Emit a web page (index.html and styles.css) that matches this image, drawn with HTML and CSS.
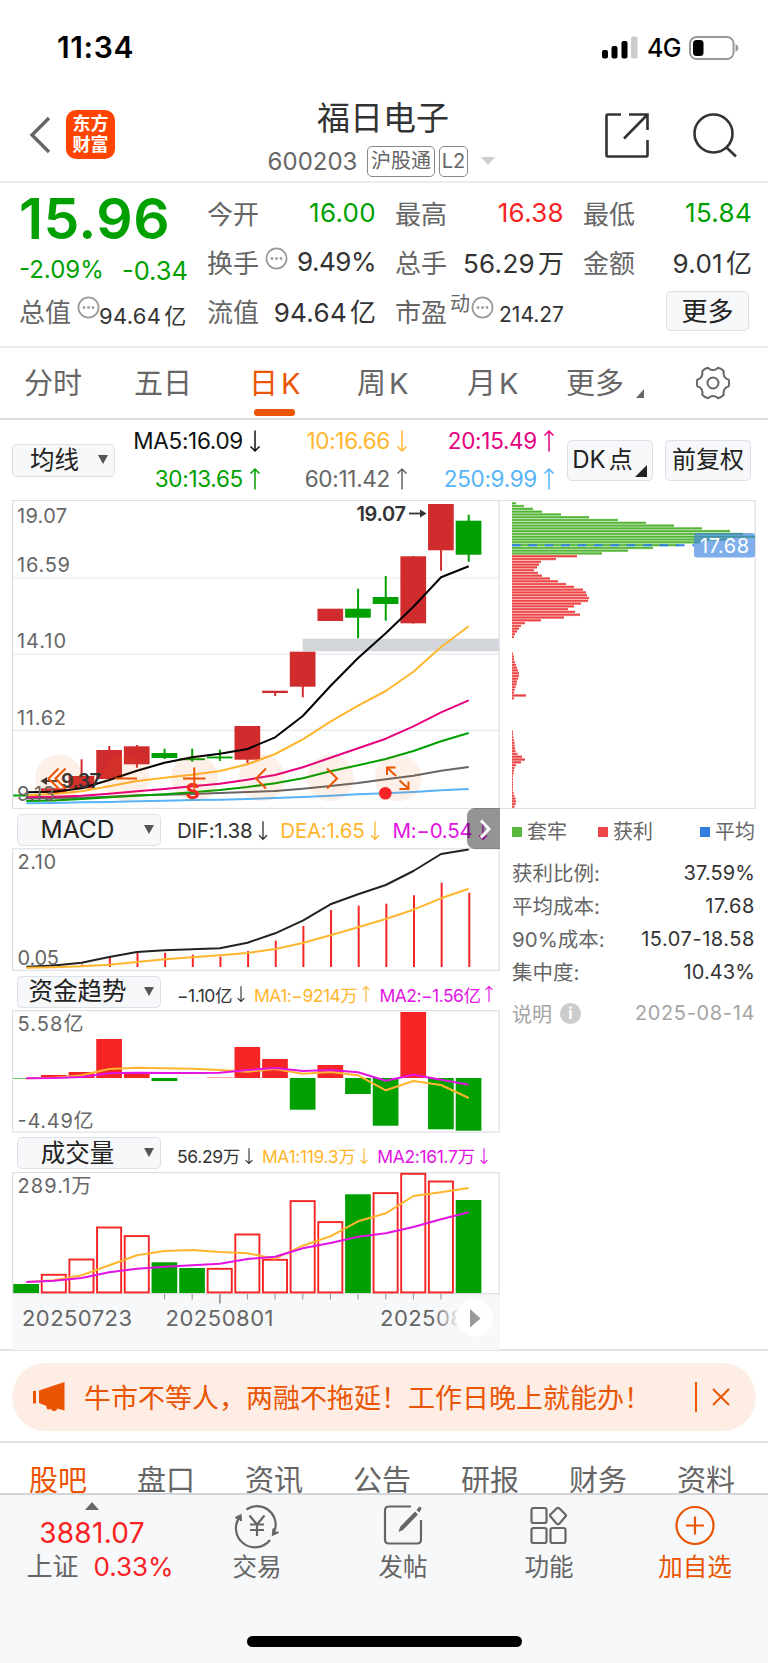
FILE: index.html
```
<!DOCTYPE html>
<html lang="zh-CN">
<head>
<meta charset="utf-8">
<meta name="viewport" content="width=device-width, initial-scale=1.0">
<title>福日电子 600203</title>
  <link rel="stylesheet" href="styles.css">
</head>
<body>

  <svg class="defs">
    <symbol id="down" viewBox="0 0 12 24"><path d="M6 1.5V22M1.5 17.5L6 22l4.500-4.500"/></symbol>
    <symbol id="up" viewBox="0 0 12 24"><path d="M6 22.500V2M1.500 6.500L6 2l4.500 4.500"/></symbol>
    <symbol id="dots" viewBox="0 0 24 24"><circle cx="12" cy="12" r="10.500"/><path d="M6 12h2.600M10.700 12h2.600M15.400 12h2.600" stroke-width="2.400"/></symbol>
  </svg>

  <div class="status">
    <span class="time">11:34</span>
    <svg class="signal" width="36" height="24" viewBox="0 0 36 24">
      <rect x="0" y="14" width="6" height="8.500" rx="2"/>
      <rect x="9.500" y="10" width="6" height="12.500" rx="2"/>
      <rect x="19.500" y="5" width="6" height="17.500" rx="2"/>
      <rect x="29" y="0.500" width="6.500" height="22" rx="2" fill="#ccc"/>
    </svg>
    <span class="net">4G</span>
    <svg class="battery" width="50" height="24" viewBox="0 0 50 24">
      <rect x="1" y="1" width="43.500" height="22" rx="6.500" fill="none" stroke="#999" stroke-width="2"/>
      <rect x="4" y="4" width="10.500" height="16" rx="3.500"/>
      <path d="M46.500 8q3 1.500 3 4t-3 4z" fill="#999"/>
    </svg>
  </div>

  <div class="header">
    <svg class="back" width="22" height="38" viewBox="0 0 22 38"><path d="M20 2L3 19l17 17"/></svg>
    <div class="logo">东方<br>财富</div>
    <div class="stock">
      <h1>福日电子</h1>
      <div class="code"><span class="num">600203</span><span class="tag">沪股通</span><span class="tag l2">L2</span><i class="caret"></i></div>
    </div>
    <svg class="share" width="46" height="46" viewBox="0 0 46 46"><path d="M17 2.500H3.500q-1 0-1 1v40q0 1 1 1h39q1 0 1-1V28M25 2.500h18.500V18M43.500 2.500L20 26.500"/></svg>
    <svg class="search" width="46" height="46" viewBox="0 0 46 46"><circle cx="21.500" cy="21.500" r="19"/><path d="M34.500 35.500L44 44.500"/></svg>
  </div>

  <div class="quote">
    <div class="col first">
      <div class="price">15.96</div>
      <div class="change"><span>-2.09%</span><span class="diff">-0.34</span></div>
      <div class="row"><label>总值</label><svg class="dots"><use href="#dots"/></svg><b class="small">94.64<i>亿</i></b></div>
    </div>
    <div class="col">
      <div class="row"><label>今开</label><b class="green">16.00</b></div>
      <div class="row"><label>换手</label><svg class="dots gap"><use href="#dots"/></svg><b class="pct">9.49%</b></div>
      <div class="row"><label>流值</label><b>94.64<i>亿</i></b></div>
    </div>
    <div class="col">
      <div class="row"><label>最高</label><b class="red">16.38</b></div>
      <div class="row"><label>总手</label><b>56.29<i>万</i></b></div>
      <div class="row"><label>市盈</label><sup>动</sup><svg class="dots"><use href="#dots"/></svg><b class="tiny">214.27</b></div>
    </div>
    <div class="col">
      <div class="row"><label>最低</label><b class="green">15.84</b></div>
      <div class="row"><label>金额</label><b>9.01<i>亿</i></b></div>
      <div class="row"><button class="more">更多</button></div>
    </div>
  </div>

  <div class="tabs">
    <span>分时</span>
    <span>五日</span>
    <span class="on">日<em>K</em></span>
    <span>周<em>K</em></span>
    <span>月<em>K</em></span>
    <span class="corner">更多</span>
    <svg class="gear" width="36" height="36" viewBox="0 0 36 36">
      <path d="M18 5Q21 5 22.900 2.800Q26.500 3.600 28.700 6.100Q28.200 9.500 29.300 11.500Q30.500 13.800 33.700 14.700Q34.600 18 33.700 21.300Q30.500 22.200 29.300 24.500Q28.200 26.500 28.700 29.900Q26.500 32.400 22.900 33.200Q21 31 18 31Q15 31 13.100 33.200Q9.500 32.400 7.300 29.900Q7.800 26.500 6.700 24.500Q5.500 22.200 2.300 21.300Q1.400 18 2.300 14.700Q5.500 13.800 6.700 11.500Q7.800 9.500 7.300 6.100Q9.500 3.600 13.100 2.800Q15 5 18 5z"/>
      <circle cx="18" cy="18" r="5.500"/>
    </svg>
  </div>

  <div class="ma">
    <button class="pick ma-pick">均线<i></i></button>
    <div class="ma-list">
      <span class="c5">MA5:16.09<svg><use href="#down"/></svg></span>
      <span class="c10">10:16.66<svg><use href="#down"/></svg></span>
      <span class="c20">20:15.49<svg><use href="#up"/></svg></span>
      <span class="c30">30:13.65<svg><use href="#up"/></svg></span>
      <span class="c60">60:11.42<svg><use href="#up"/></svg></span>
      <span class="c250">250:9.99<svg><use href="#up"/></svg></span>
    </div>
    <button class="dk">DK<span>点</span></button>
    <button class="fq">前复权</button>
  </div>

  <div class="charts">
    <div class="left">
      <svg id="kline" width="500" height="309" viewBox="0 500 500 309"></svg>

      <div class="ind">
        <button class="pick">MACD<i></i></button>
        <div class="vals">
          <span class="c60b">DIF:1.38<svg><use href="#down"/></svg></span>
          <span class="c10">DEA:1.65<svg><use href="#down"/></svg></span>
          <span class="mag">M:−0.54<svg><use href="#down"/></svg></span>
        </div>
        <div class="fold"><svg width="12" height="20" viewBox="0 0 12 20"><path d="M2 1.500l8 8.500l-8 8.500"/></svg></div>
      </div>
      <svg id="macd" width="500" height="123" viewBox="0 848 500 123"></svg>

      <div class="ind fund">
        <button class="pick">资金趋势<i></i></button>
        <div class="vals sm">
          <span class="c60b">−1.10亿<svg><use href="#down"/></svg></span>
          <span class="c10">MA1:−9214万<svg><use href="#up"/></svg></span>
          <span class="mag">MA2:−1.56亿<svg><use href="#up"/></svg></span>
        </div>
      </div>
      <svg id="fund" width="500" height="123" viewBox="0 1010 500 123"></svg>

      <div class="ind vol">
        <button class="pick">成交量<i></i></button>
        <div class="vals sm">
          <span class="c60b">56.29万<svg><use href="#down"/></svg></span>
          <span class="c10">MA1:119.3万<svg><use href="#down"/></svg></span>
          <span class="mag">MA2:161.7万<svg><use href="#down"/></svg></span>
        </div>
      </div>
      <svg id="vol" width="500" height="178" viewBox="0 1172 500 178"></svg>
    </div>

    <div class="right">
      <svg id="chips" width="268" height="309" viewBox="500 500 268 309"></svg>
      <div class="legend">
        <span><i class="g"></i>套牢</span>
        <span><i class="r"></i>获利</span>
        <span><i class="b"></i>平均</span>
      </div>
      <dl>
        <dt>获利比例:</dt><dd>37.59%</dd>
        <dt>平均成本:</dt><dd>17.68</dd>
        <dt>90%成本:</dt><dd>15.07-18.58</dd>
        <dt>集中度:</dt><dd>10.43%</dd>
      </dl>
      <div class="note"><span>说明</span><i>i</i><time>2025-08-14</time></div>
    </div>
  </div>

  <div class="ad">
    <div class="banner">
      <svg width="34" height="30" viewBox="0 0 34 30"><path d="M1 9h3v12.500H1zM7 8.500L32.500 0v28.500l-7.500-2v1q-1 2-4 1.500l-1.500-1v-1.500l-1.500 1q-2.500.500-3.500-1.500v-2L7 21z"/></svg>
      <p>牛市不等人，两融不拖延！工作日晚上就能办！</p>
      <svg class="close" width="18" height="18" viewBox="0 0 18 18"><path d="M1 1l16 16M17 1L1 17"/></svg>
    </div>
  </div>

  <div class="sections">
    <span class="on">股吧</span><span>盘口</span><span>资讯</span><span>公告</span><span>研报</span><span>财务</span><span>资料</span>
  </div>

  <div class="bottom">
    <div class="index">
      <i></i>
      <strong>3881.07</strong>
      <p>上证<em>0.33%</em></p>
    </div>
    <div class="item">
      <svg width="46" height="42" viewBox="0 0 46 42"><path d="M12.500 5.500A18.500 18.500 0 0 1 41 25.500l-1.500 4.500M36 36A18.500 18.500 0 0 1 6 12.500M1.500 14l5-2.500l.500 5.500M44.500 28l-5.500 2.500l.500-6M15.500 11.500l7.500 9l7.500-9M23 20.500v11.500M16 20.500h14M16 26h14"/></svg>
      <span>交易</span>
    </div>
    <div class="item">
      <svg width="42" height="42" viewBox="0 0 42 42"><path d="M29 2.500H7q-4 0-4 4v29q0 4 4 4h28q4 0 4-4V16"/><path d="M16.500 28l1.500-5L33 7.500l3 3L21 26zM34.500 6l2.500-3q2-1 2.500 1.500L37.500 8.500z" fill="#666" stroke="none"/></svg>
      <span>发帖</span>
    </div>
    <div class="item">
      <svg width="42" height="42" viewBox="0 0 42 42"><rect x="3.500" y="4" width="15" height="15" rx="2"/><rect x="3.500" y="24" width="15" height="15" rx="2"/><rect x="22.500" y="24" width="15" height="15" rx="2"/><path d="M28.500 4.500q1.500-1.500 3 0l6 6q1 1 0 2l-6 7q-1.500 1.500-3 0l-6-7q-1-1 0-2z"/></svg>
      <span>功能</span>
    </div>
    <div class="item add">
      <svg width="42" height="42" viewBox="0 0 42 42"><circle cx="21" cy="21.500" r="18.500"/><path d="M21 12.500v18M12 21.500h18"/></svg>
      <span>加自选</span>
    </div>
    <div class="home"></div>
  </div>

  <script src="script.js"></script>
</body>
</html>
```
FILE: styles.css
```
* {
  box-sizing: border-box;
}

body {
  margin: 0;
  width: 768px;
  height: 1663px;
  overflow: hidden;
  background-color: #fff;
  color: #333;
  font-family: Inter, "Noto Sans CJK SC", sans-serif;
  font-weight: 400;
}

svg {
  display: block;
  flex: none;
}

i, em {
  font-style: normal;
}

button {
  font-family: inherit;
  color: #222;
  background-color: #f7f8fa;
  border: 1.500px solid #dde0e6;
  border-radius: 5px;
  padding: 0;
}

.defs {
  position: absolute;
  width: 0;
  height: 0;
}

/* status bar */
.status {
  display: flex;
  align-items: center;
  height: 94px;
  padding: 0 29px 0 57px;
}

.time {
  font-size: 30px;
  font-weight: 600;
  color: #000;
  margin-right: auto;
  letter-spacing: 0.6px;
}

.net {
  font-size: 25px;
  font-weight: 500;
  color: #000;
  margin: 2px 9px 0 9px;
  width: 33px;
  letter-spacing: -0.7px;
}

.signal,
.battery {
  margin-top: 1px;
}

/* header */
.header {
  display: flex;
  align-items: center;
  height: 89px;
  border-bottom: 2px solid #ececec;
  padding: 0 30px 6px 29px;
}

.header svg {
  fill: none;
  stroke: #333;
  stroke-width: 2.6;
}

.header .back {
  stroke: #666;
  stroke-width: 3.4;
}

.logo {
  width: 49px;
  height: 49px;
  margin-left: 15px;
  border-radius: 10px;
  background-color: #ff4400;
  color: #fff;
  font-size: 18px;
  font-weight: 600;
  line-height: 20.5px;
  text-align: center;
  padding-top: 4px;
}

.stock {
  width: 240px;
  margin: 4px auto 0 148px;
  text-align: center;
}

.stock h1 {
  margin: 2px 0 0;
  font-size: 33px;
  font-weight: 400;
  line-height: 42px;
}

.code {
  display: flex;
  align-items: center;
  height: 34px;
  margin: 5px 0 0 4px;
  color: #666;
}

.code .num {
  font-size: 24px;
  width: 91px;
  letter-spacing: 0;
}

.tag {
  height: 31px;
  width: 68px;
  margin-left: 9px;
  border: 1.5px solid #888;
  border-radius: 5px;
  font-size: 20px;
  line-height: 28px;
}

.tag.l2 {
  width: 29px;
  margin-left: 4px;
}

.caret {
  border: 7px solid transparent;
  border-top: 8px solid #ccc;
  border-bottom: 0;
  margin-left: 13px;
}

.share {
  margin-right: 0;
}

.search {
  margin-left: 42px;
}

/* quote */
.quote {
  display: flex;
  height: 165px;
  border-bottom: 2px solid #ececec;
  padding: 5px 15px 0 19px;
}

.col {
  width: 169px;
  margin-left: 19px;
}

.col.first {
  margin-left: 0;
}

.row {
  display: flex;
  align-items: center;
  height: 49px;
}

.row label {
  font-size: 26px;
  color: #666;
}

.row b {
  margin-left: auto;
  font-size: 26px;
  font-weight: 400;
  letter-spacing: 0.3px;
  white-space: nowrap;
}

.row b i {
  margin-left: 3px;
  letter-spacing: 0;
}

.row b.pct {
  letter-spacing: -0.5px;
}

.row b.small {
  font-size: 22px;
  margin: 6px 0 0 -1px;
}

.row b.tiny {
  font-size: 21px;
  letter-spacing: 0;
  margin-top: 7px;
}

.green {
  color: #00a000;
}

.red {
  color: #f82222;
}

.row sup {
  font-size: 20px;
  color: #666;
  margin: -14px 1px 0 3px;
  line-height: 20px;
}

.dots {
  width: 23px;
  height: 23px;
  margin: -7px 0 0 6px;
  fill: none;
  stroke: #999;
  stroke-width: 1.8;
}

sup + .dots {
  margin-left: 0;
}

.price {
  height: 65px;
  color: #00a000;
  font-size: 57px;
  font-weight: 600;
  line-height: 61px;
  letter-spacing: 0.4px;
}

.change {
  display: flex;
  justify-content: space-between;
  height: 33px;
  line-height: 33px;
  color: #00a000;
  font-size: 24px;
}

.diff {
  font-size: 25.5px;
  padding-top: 1px;
}

.more {
  width: 83px;
  height: 40px;
  margin: 1px 3px 0 auto;
  font-size: 26px;
  line-height: 37px;
}

/* period tabs */
.tabs {
  display: grid;
  grid-template-columns: 110px 110px 111px 110px 110px 117px 1fr;
  height: 72px;
  border-bottom: 2px solid #d8dbe0;
  font-size: 29px;
  line-height: 72px;
  color: #666;
}

.tabs span {
  padding-left: 24px;
  white-space: nowrap;
}

.tabs span:nth-child(3) {
  padding-left: 29px;
}

.tabs span:nth-child(4),
.tabs span:nth-child(5) {
  padding-left: 26px;
}

.tabs span:nth-child(6) {
  padding-left: 15px;
}

.tabs em {
  margin-left: 3px;
}

.tabs .on {
  position: relative;
  color: #ea5504;
}

.tabs .on::after {
  content: "";
  position: absolute;
  left: 34px;
  bottom: 4px;
  width: 41px;
  height: 7px;
  border-radius: 3px;
  background-color: #ea5504;
}

.corner::after {
  content: "";
  display: inline-block;
  border-left: 8px solid transparent;
  border-bottom: 9px solid #666;
  margin-left: 12px;
  vertical-align: -4px;
}

.gear {
  margin: 17px 0 0 27px;
  fill: none;
  stroke: #666;
  stroke-width: 2;
}

/* moving averages */
.ma {
  display: flex;
  align-items: center;
  height: 80px;
  padding-left: 12px;
}

.pick {
  position: relative;
  width: 144px;
  height: 32px;
  font-size: 24.5px;
  line-height: 29px;
  padding-right: 23px;
}

.pick i {
  position: absolute;
  right: 6px;
  top: 10px;
  border: 5px solid transparent;
  border-top: 9px solid #555;
  border-bottom: 0;
}

.ma-pick {
  width: 103px;
  height: 33px;
  padding-right: 18px;
}

.ma-list {
  display: grid;
  grid-template-columns: 146px 147px 147px;
  grid-auto-rows: 38px;
  width: 440px;
  font-size: 22.5px;
  line-height: 38px;
  letter-spacing: -0.3px;
}

.ma-list span {
  display: flex;
  align-items: center;
  justify-content: flex-end;
}

.ma-list svg,
.vals svg {
  width: 12px;
  height: 24px;
  margin-left: 6px;
  fill: none;
  stroke: currentColor;
  stroke-width: 1.5;
}

.c5 { color: #111; }
.c10 { color: #ffb62e; }
.c20 { color: #e6007e; }
.c30 { color: #00a000; }
.c60 { color: #666; }
.c60b { color: #333; }
.c250 { color: #58b4f8; }
.mag { color: #e313e3; }

.dk,
.fq {
  position: relative;
  width: 86px;
  height: 41px;
  font-size: 24px;
  line-height: 38px;
  white-space: nowrap;
}

.dk {
  margin-left: 12px;
  padding-right: 15px;
}

.dk span {
  margin-left: 3px;
  font-size: 24px;
}

.dk::after {
  content: "";
  position: absolute;
  right: 5px;
  bottom: 3px;
  border-left: 12px solid transparent;
  border-bottom: 12px solid #222;
}

.fq {
  margin-left: 12px;
}

/* charts */
.charts {
  display: grid;
  grid-template-columns: 500px 268px;
  height: 851px;
  border-bottom: 2px solid #e0e3e7;
}

.ind {
  position: relative;
  display: flex;
  align-items: center;
  height: 39px;
  padding: 2px 0 0 17px;
}

.ind.vol {
  padding-top: 1px;
}

.ind .pick {
  flex: none;
}

.vals {
  display: flex;
  gap: 11px;
  margin: 2px 0 0 16px;
  font-size: 20.500px;
  letter-spacing: -0.25px;
  white-space: nowrap;
}

.vals.sm {
  font-size: 17.5px;
  letter-spacing: -0.5px;
  margin-top: 5px;
  gap: 7px;
}

.vals span {
  display: flex;
  align-items: center;
}

.vals svg {
  height: 21px;
  margin-left: 5px;
}

.vals.sm svg {
  height: 18px;
  margin-left: 3px;
}

.vol .vals.sm {
  letter-spacing: -0.35px;
}

.fold {
  position: absolute;
  right: 0;
  top: -1px;
  width: 33px;
  height: 41px;
  border-radius: 8px 0 0 8px;
  background-color: rgba(0, 0, 0, 0.42);
  padding: 11px 0 0 12px;
}

.fold path {
  fill: none;
  stroke: #fff;
  stroke-width: 2.8;
}

svg text {
  font-size: 20px;
  fill: #666;
}

/* cost panel */
.legend {
  display: flex;
  width: 243px;
  margin: 9px 0 0 12px;
  font-size: 20px;
  line-height: 28px;
  color: #666;
}

.legend span:nth-child(2) {
  margin-left: 31px;
}

.legend span:nth-child(3) {
  margin-left: auto;
}

.legend i {
  display: inline-block;
  width: 10px;
  height: 10px;
  margin-right: 5px;
  vertical-align: 2px;
}

.legend .g { background-color: #5bb83f; }
.legend .r { background-color: #ec4747; }
.legend .b { background-color: #2f80e2; }

dl {
  display: grid;
  grid-template-columns: auto auto;
  grid-auto-rows: 33px;
  width: 243px;
  margin: 11px 0 0 12px;
  line-height: 33px;
}

dt {
  font-size: 20.5px;
  color: #666;
}

dd {
  margin: 0;
  font-size: 20px;
  letter-spacing: 0.55px;
  text-align: right;
}

dd:first-of-type,
dd:last-of-type {
  letter-spacing: 0.1px;
}

.note {
  display: flex;
  align-items: center;
  width: 243px;
  height: 30px;
  margin: 9px 0 0 12px;
  font-size: 20px;
  color: #a5a5a5;
}

.note i {
  width: 21px;
  height: 21px;
  margin-left: 8px;
  border-radius: 50%;
  background-color: #ccc;
  color: #fff;
  font-size: 16px;
  font-weight: 700;
  line-height: 21px;
  text-align: center;
}

.note time {
  margin-left: auto;
  letter-spacing: 0.65px;
}

/* banner */
.ad {
  height: 92px;
  padding: 12px;
  border-bottom: 2px solid #e0e3e7;
}

.banner {
  display: flex;
  align-items: center;
  height: 68px;
  border-radius: 34px;
  background-color: #fdede5;
  padding-left: 20px;
}

.banner svg {
  fill: #ea5504;
}

.banner p {
  width: 631px;
  height: 30px;
  margin: 0;
  padding-left: 18px;
  border-right: 2px solid #ea5504;
  font-size: 27px;
  line-height: 33px;
  color: #ea5504;
}

.banner .close {
  margin-left: 15px;
  stroke: #ea5504;
  stroke-width: 2;
}

/* section tabs */
.sections {
  display: flex;
  gap: 50px;
  height: 50px;
  padding: 0 0 0 29px;
  overflow: hidden;
  font-size: 29px;
  line-height: 75px;
  color: #666;
}

.sections .on {
  color: #ea5504;
}

/* bottom bar */
.bottom {
  position: relative;
  display: flex;
  height: 170px;
  border-top: 2px solid #d3d5d8;
  background-color: #f7f8fa;
}

.index {
  width: 184px;
  text-align: center;
  color: #f82222;
}

.index i {
  display: block;
  width: 14px;
  margin: 7px 0 0 85px;
  border: 7px solid transparent;
  border-bottom: 8px solid #666;
  border-top: 0;
}

.index strong {
  display: block;
  font-size: 28px;
  font-weight: 400;
  line-height: 46px;
  letter-spacing: 0.3px;
}

.index p {
  margin: -8px 0 0 16px;
  font-size: 26px;
  line-height: 38px;
  color: #666;
}

.index em {
  margin-left: 15px;
  color: #f82222;
}

.item {
  display: flex;
  flex-direction: column;
  align-items: center;
  width: 146px;
  padding-top: 9px;
  font-size: 24.5px;
  line-height: 42px;
  color: #666;
}

.item svg {
  fill: none;
  stroke: #666;
  stroke-width: 2.2;
  overflow: visible;
}

.item.add {
  color: #ea5504;
}

.item.add svg {
  stroke: #ea5504;
}

.home {
  position: absolute;
  left: 247px;
  bottom: 16px;
  width: 275px;
  height: 11px;
  border-radius: 6px;
  background-color: #000;
}
```
FILE: script.js
```
const RED = '#d02c2e', GREEN = '#00a000', HOT = '#f52525', YEL = '#ffb62e', MAG = '#e313e3';
const STEP = 27.65;
const cx = i => 26.3 + STEP * i;
const left = i => 13.3 + STEP * i;
const BAR = 25.7;

const rect = (x, y, w, h, fill, extra = '') =>
  `<rect x="${x}" y="${y}" width="${w}" height="${h}" fill="${fill}" ${extra}/>`;
const line = (x1, y1, x2, y2, color, w = 1.3) =>
  `<path d="M${x1} ${y1}L${x2} ${y2}" stroke="${color}" stroke-width="${w}" fill="none"/>`;
const curve = (ys, color, w = 2) =>
  `<polyline points="${ys.map((y, i) => cx(i) + ',' + y).join(' ')}" fill="none" stroke="${color}" stroke-width="${w}" stroke-linejoin="round"/>`;
const text = (x, y, len, str, extra = '') =>
  `<text x="${x}" y="${y}" textLength="${len}" ${extra}>${str}</text>`;
const frame = (x, y, w, h) => rect(x, y, w, h, 'none', 'stroke="#dcdfe3" stroke-width="1.2"');

// [color, high, bodyTop, bodyBottom, low]
const candles = [
  [GREEN, 795, 794.5, 796.5, 796], [RED, 788, 788.3, 793, 793], [RED, 759.3, 776, 788.5, 788],
  [RED, 746, 750, 779, 779], [RED, 745, 746.3, 764.3, 767.7], [GREEN, 748.7, 753, 758, 759],
  [GREEN, 748.7, 758.3, 760.2, 761.7], [GREEN, 749.7, 756.5, 758.4, 761], [RED, 726, 726, 759.7, 763],
  [RED, 691, 690.7, 693, 696], [RED, 652, 651.7, 686.7, 697.3], [RED, 609, 608.7, 621, 621],
  [GREEN, 588.7, 608.7, 617.7, 638.3], [GREEN, 576, 597, 604, 620.7], [RED, 556, 556.3, 623.3, 623.5],
  [RED, 504, 504, 550.3, 570.7], [GREEN, 514.7, 520.7, 554.7, 561.7]
];

function drawKline() {
  let s = frame(12.6, 500.5, 486.6, 308);
  [578, 654.2, 730.4].forEach(y => s += line(13, y, 499, y, '#e6e8f0', 1.2));
  s += rect(302.7, 638.7, 196, 12.6, '#d2d5da');
  candles.forEach(([c, hi, top, bot, lo], i) => {
    s += rect(left(i), top, BAR, bot - top, c) + line(cx(i), hi, cx(i), lo, c, 2);
  });
  s += curve([803.3, 803, 802.3, 802, 801.3, 800.7, 800, 799.7, 799, 798, 797, 795.7, 794.3, 793.3, 792, 790.3, 789], '#58b4f8');
  s += curve([798.5, 798, 797.7, 796.7, 795.3, 794.7, 794, 793, 792, 791, 788.7, 786, 783, 779.3, 775.7, 770.7, 767], '#666');
  s += curve([801, 800.5, 799, 797.3, 795.7, 794.3, 792.3, 790, 787, 783.3, 778.3, 771.3, 765.3, 759, 751, 741.3, 733], '#00a000');
  s += curve([797.3, 796.7, 795.7, 793.7, 791.3, 789, 786.3, 783.7, 779.7, 775, 767.3, 757.7, 748.3, 738.7, 726.3, 712.3, 700.3], '#e6007e');
  s += curve([795.3, 794, 791.3, 786.3, 781, 777.7, 774.7, 771, 764.3, 754, 739.3, 721.7, 705.7, 691, 671.7, 647, 626.3], YEL);
  s += curve([792.3, 791.7, 788.3, 780, 770.7, 762.7, 757.3, 753.7, 749, 737.3, 716, 686, 658, 633.3, 606.7, 577.3, 566.3], '#000');
  s += text(17, 523, 50, '19.07') + text(17, 571.7, 53, '16.59') + text(17, 648, 49, '14.10') + text(17, 725, 49, '11.62') + text(17, 801, 38, '9.13');
  s += text(356.5, 520.5, 49.5, '19.07', 'style="font-weight:600;fill:#333"');
  s += line(409, 513.5, 421, 513.5, '#333', 1.8) + '<path d="M420 509.500l6.500 4l-6.500 4z" fill="#333"/>';
  s += text(61, 788, 40, '9.37', 'style="font-weight:600;fill:#333"');
  s += line(46, 781, 58, 781, '#333', 1.8) + '<path d="M47 777l-6.500 4l6.500 4z" fill="#333"/>';
  s += '<text x="185.500" y="799" style="font-size:22px;font-weight:700;fill:#f52525">S</text>';

  // floating controls
  [58.7, 126, 194.3, 262, 330.3, 398.3].forEach(x => s += `<circle cx="${x}" cy="778" r="23.500" fill="#ea5504" fill-opacity=".09"/>`);
  s += `<g fill="none" stroke="#ea5504" stroke-width="2">
    <path d="M58.500 768.500L48.500 778.500L58.500 788.500M65.500 768.500L55.500 778.500L65.500 788.500M115 778.500h22M183 778.500h22.500M194.300 767.500v22M266 768.500L256 778.500L266 788.500M327 768.500L337 778.500L327 788.500"/>
    <path d="M387 775v-7.500h8.500M387.500 768l8.500 8M408.500 781.500v7.500h-9M408.500 788.500l-9-8"/></g>`;
  s += '<circle cx="385.300" cy="793.300" r="6.300" fill="#f52525"/>';
  document.getElementById('kline').innerHTML = s;
}

function drawMacd() {
  let s = frame(12.6, 848.8, 486.6, 121.5);
  const tops = [, , 964.5, 957, 952, 952.7, 954.7, 956.7, 951, 940.7, 926, 910, 905.7, 903.7, 895.3, 882.7, 892.7];
  tops.forEach((y, i) => s += line(cx(i) + 0.6, y, cx(i) + 0.6, 967, HOT, 2));
  s += text(17.5, 868.7, 38.5, '2.10') + text(17.5, 965, 41.5, '0.05');
  s += curve([966.7, 965.5, 962.7, 957, 952, 950.3, 949.3, 948.3, 942.7, 933.3, 920.7, 904.3, 894.3, 885, 871, 854, 849.5], '#222');
  s += curve([967.7, 967.3, 966.3, 964.7, 962, 959.3, 957.3, 955.3, 953, 949, 943, 935.3, 927.3, 919, 909.7, 898.3, 888.7], YEL);
  document.getElementById('macd').innerHTML = s;
}

function drawFund() {
  const zero = 1078;
  const ends = [1078.6, 1075, 1072, 1039, 1074, 1081, 1078, 1077.6, 1047, 1059, 1109.7, 1065, 1094, 1125.7, 1012, 1129.3, 1130.7];
  let s = frame(12.6, 1010.6, 486.6, 121.5);
  ends.forEach((y, i) => s += rect(left(i), Math.min(y, zero), BAR, Math.abs(y - zero), y < zero ? HOT : GREEN));
  s += text(17.5, 1031, 66, '5.58亿') + text(17.5, 1127.5, 76, '-4.49亿');
  s += curve([1078.3, 1077.7, 1075.3, 1069, 1067.7, 1068.3, 1068.7, 1070, 1071.7, 1069, 1073.7, 1072, 1075.3, 1090.3, 1081, 1085, 1098], YEL);
  s += curve([1078.3, 1078, 1077, 1073.3, 1072.7, 1073, 1073, 1072.7, 1070, 1068, 1071, 1070, 1072.3, 1080.7, 1074.7, 1079.7, 1084.7], MAG);
  document.getElementById('fund').innerHTML = s;
}

function drawVol() {
  const tops = [1284, 1274, 1258.7, 1226.7, 1235.3, 1262.3, 1268, 1268, 1233.7, 1259, 1200.3, 1221.3, 1194.3, 1192.3, 1173, 1180.7, 1200];
  const down = [0, 5, 6, 12, 16];
  let s = rect(12.5, 1294, 487.5, 56, '#f7f8fa') + frame(12.6, 1172.6, 486.6, 121);
  tops.forEach((y, i) => {
    s += down.includes(i)
      ? rect(left(i), y, BAR, 1293 - y, GREEN)
      : rect(left(i) + 0.8, y + 0.8, BAR - 1.6, 1291.6 - y, '#fff', `stroke="${HOT}" stroke-width="1.900"`);
  });
  s += text(17.5, 1193, 74, '289.1万');
  s += curve([1282, 1280.3, 1275.3, 1265.3, 1255.3, 1251, 1250, 1252, 1253.3, 1258.7, 1245.7, 1236.3, 1221.3, 1213.3, 1196, 1192.3, 1188], YEL);
  s += curve([1282, 1280.7, 1278, 1272.3, 1268.7, 1266.7, 1265.3, 1263.7, 1259, 1256.7, 1248.3, 1243, 1236.7, 1233.3, 1227, 1219.3, 1212.3], MAG);
  for (let i = 5; i < 16; i++) s += line(cx(i), 1294, cx(i), i == 7 ? 1303.5 : 1299.5, '#999', i == 7 ? 1.8 : 1.1);
  const f = 'style="font-size:22px"';
  s += text(22, 1326, 110, '20250723', f) + text(165.5, 1326, 108, '20250801', f) + text(380, 1326, 108, '20250814', f);
  s += `<defs><linearGradient id="fade"><stop offset="0" stop-color="#f7f8fa" stop-opacity="0"/><stop offset="1" stop-color="#f7f8fa"/></linearGradient></defs>`;
  s += rect(434, 1302, 26, 34, 'url(#fade)') + rect(460, 1302, 39, 34, '#f7f8fa');
  s += '<circle cx="474.500" cy="1318" r="18.500" fill="#fff"/><path d="M470 1309l10.500 9.500l-10.500 9z" fill="#999"/>';
  document.getElementById('vol').innerHTML = s;
}

function drawChips() {
  // bar lengths from the top price level down
  const len = [4, 12, 21, 30, 49, 77, 106, 134, 162, 190, 218, 231, 243, 215, 188, 166, 141, 116, 90,
    65, 44, 29, 27, 25, 22, 26, 30, 38, 46, 54, 62, 71, 74, 75, 77, 76, 69, 62, 56, 63, 68, 52, 29, 13, 9, 7, 5, 3, 2,
    0, 0, 0, 0, 0, 1, 2, 2, 3, 4, 5, 6, 7, 7, 6, 5, 4.5, 3.5, 2.5, 2, 14, 2,
    0, 0, 0, 0, 0, 0, 0, 0, 0, 0, 0, 1, 1, 1.3, 2, 2.5, 2.5, 3, 3.5, 5.5, 10, 13, 9, 4, 2.5, 2, 1.5, 1, 1, 1, 1, 1, 1,
    1.5, 2.3, 3.5, 4, 3.5, 2.3];
  let s = frame(499.2, 500.5, 256, 308);
  len.forEach((w, n) => {
    const y = 503.3 + 2.785 * n;
    const green = n < 19;
    s += rect(512, y - 1.3, w, 2.7, green ? '#a5db94' : '#f79c9c') + rect(512, y - 0.8, w, 1.6, green ? '#52b336' : '#ec4444');
  });
  s += `<path d="M512 545.300H694" stroke="#2f80e8" stroke-width="2" stroke-dasharray="8.600 7.800" fill="none"/>`;
  s += rect(694, 533, 61, 24.5, '#3c82e1', 'fill-opacity=".65" rx="3"');
  s += text(700, 552.5, 49, '17.68', 'style="fill:#fff"');
  document.getElementById('chips').innerHTML = s;
}

drawKline();
drawMacd();
drawFund();
drawVol();
drawChips();
```
